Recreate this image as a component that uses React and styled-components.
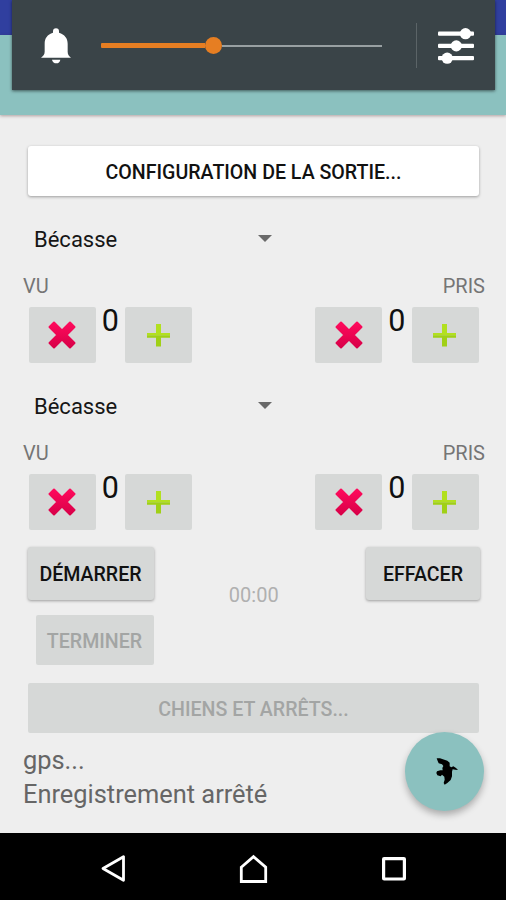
import styled, { createGlobalStyle } from "styled-components";

const GlobalStyle = createGlobalStyle`
  * {
    box-sizing: border-box;
  }
  body {
    margin: 0;
    background: #eeeeee;
    font-family: Roboto, "Noto Sans", sans-serif;
  }
`;

const Screen = styled.div`
  position: relative;
  width: 506px;
  height: 900px;
  display: flex;
  flex-direction: column;
  background: #eeeeee;
  overflow: hidden;
`;

const StatusBar = styled.div`
  height: 35px;
  background: #303f9f;
`;

const AppBar = styled.div`
  height: 80px;
  background: #8bc1bf;
  box-shadow: 0 1px 3px rgba(80, 40, 40, 0.4);
`;

// floats over the status bar and the app bar
const VolumePanel = styled.div`
  position: absolute;
  top: 0;
  left: 12px;
  width: 483px;
  height: 90px;
  padding: 1px 21px 0 29px;
  display: flex;
  align-items: center;
  background: #3a4448;
  box-shadow: 0 1px 3px rgba(0, 0, 0, 0.55);
`;

const Slider = styled.div`
  flex: 1;
  display: flex;
  align-items: center;
  margin: 0 34px 0 30px;
`;

const SliderFill = styled.div`
  width: 104px;
  height: 5px;
  border-radius: 1px 0 0 1px;
  background: #e67e22;
`;

const SliderThumb = styled.div`
  width: 17px;
  height: 17px;
  border-radius: 50%;
  background: #e67e22;
`;

const SliderTrack = styled.div`
  flex: 1;
  height: 2px;
  background: #98a0a2;
`;

const PanelDivider = styled.div`
  width: 1px;
  height: 45px;
  margin: 0 21px 0 0;
  background: #5b6467;
`;

const Content = styled.main`
  flex: 1;
  padding: 31px 21px 0 23px;
`;

const Button = styled.button`
  display: block;
  width: ${({ $width }) => $width || "auto"};
  height: ${({ $height }) => $height || "50px"};
  padding: 1px 0 0;
  border: none;
  border-radius: 3px;
  background: ${({ $white }) => ($white ? "#ffffff" : "#d6d8d7")};
  color: #111111;
  font-family: inherit;
  font-size: 19.6px;
  font-weight: 500;
  line-height: 25px;
  box-shadow: 0 1px 3px rgba(0, 0, 0, 0.35);

  &:disabled {
    padding-top: 2px;
    color: #a3a5a4;
    border-radius: 2px;
    box-shadow: none;
  }
`;

const WideButton = styled(Button)`
  width: auto;
  min-width: 451px;
  margin: 0 5px;
  padding-top: 2px;
`;

const Species = styled.section`
  padding-top: 23px;
`;

const Spinner = styled.div`
  width: 249px;
  height: 40px;
  padding-left: 11px;
  display: flex;
  align-items: center;
  justify-content: space-between;
  color: #161616;
  font-size: 22px;
`;

const Arrow = styled.span`
  border: 7px solid transparent;
  border-top-color: #696969;
  border-bottom: none;
  margin-top: -2px;
`;

const Labels = styled.div`
  display: flex;
  justify-content: space-between;
  margin-top: 15px;
  color: #757575;
  font-size: 20px;
  line-height: 24px;
`;

const Counters = styled.div`
  display: flex;
  justify-content: space-between;
  padding: 0 6.5px 0 5.5px;
  margin-top: 9px;
`;

const Counter = styled.div`
  display: flex;
  height: 56px;
`;

const CounterButton = styled.button`
  width: 67px;
  height: 56px;
  padding: 0;
  border: none;
  border-radius: 2px;
  background: #d6d8d7;
  display: flex;
  align-items: center;
  justify-content: center;
`;

const Count = styled.span`
  width: 29.5px;
  text-align: center;
  color: #101010;
  font-size: 30.5px;
  line-height: 28px;
`;

const Actions = styled.div`
  display: flex;
  justify-content: space-between;
  height: 118px;
  margin: 17px 5px 18px 4.5px;
`;

const LeftActions = styled.div`
  display: flex;
  flex-direction: column;
  align-items: flex-end;
  justify-content: space-between;
`;

const Timer = styled.span`
  margin: 36px 0 0 -12px;
  color: #b0b0b0;
  font-size: 20px;
  line-height: 24px;
`;

const Status = styled.div`
  margin-top: 10px;
  color: #666666;
  font-size: 25.4px;
  line-height: 34px;
`;

const Fab = styled.button`
  position: absolute;
  left: 405px;
  top: 732px;
  width: 79px;
  height: 79px;
  padding: 0 0 0 4px;
  border: none;
  border-radius: 50%;
  background: #8bc1bf;
  box-shadow: 0 4px 7px rgba(0, 0, 0, 0.28);
  display: flex;
  align-items: center;
  justify-content: center;
`;

const NavBar = styled.nav`
  height: 67px;
  background: #000000;
  display: flex;
  align-items: center;
  justify-content: space-between;
  padding: 4px 99px 0 99.5px;
`;

const BellIcon = () => (
  <svg width="30" height="36" viewBox="0 0 90 108" fill="#fff">
    <path d="M45 1c-6 0-9 4-9 9v4C19 19 11 31 11 47v24C11 80 6 84 0 89h90c-6-5-10-9-10-18V47C80 31 71 19 54 14v-4c0-5-3-9-9-9z" />
    <path d="M33 95h25c-1 7-6 11-12 11s-12-4-13-11z" />
  </svg>
);

const TuneIcon = () => (
  <svg width="36" height="38" viewBox="0 0 36 38" fill="#fff">
    <rect x="0" y="4.5" width="36" height="4.3" rx="1" />
    <rect x="0" y="16.7" width="36" height="4.3" rx="1" />
    <rect x="0" y="28.9" width="36" height="4.3" rx="1" />
    <circle cx="27.5" cy="6.7" r="5.6" />
    <circle cx="18.3" cy="18.9" r="5.6" />
    <circle cx="9.2" cy="31.2" r="5.6" />
  </svg>
);

const CrossIcon = () => (
  <svg width="28" height="28" viewBox="0 0 28 28">
    <defs>
      <linearGradient id="cross" x1="0" y1="0" x2="0" y2="1">
        <stop offset="0" stopColor="#ff0a5c" />
        <stop offset="1" stopColor="#d80048" />
      </linearGradient>
    </defs>
    <path
      fill="url(#cross)"
      stroke="url(#cross)"
      strokeWidth="2"
      strokeLinejoin="round"
      d="M6 1.5L14 9.5L22 1.5L26.5 6L18.5 14L26.5 22L22 26.5L14 18.5L6 26.5L1.5 22L9.5 14L1.5 6Z"
    />
  </svg>
);

const PlusIcon = () => (
  <svg width="24" height="24" viewBox="0 0 24 24">
    <path fill="#b2e01f" d="M9 1h5v9h9v2.3h-23v-2.3h9z" />
    <path fill="#a0d016" d="M0 12.3h23v2.5h-9v8.7h-5v-8.7h-9z" />
  </svg>
);

const BirdIcon = () => (
  <svg width="22" height="27" viewBox="0 0 66 81">
    <path d="M2 1L12 1L34 8L41 14L41 25L46 28L52 25L60 30L66 36L58 35L50 34L48 41L48 55L44 66L34 75L26 80L23 75L26 65L25 56L18 50L14 55L4 52L1 45L3 40L13 37L20 37L19 30L22 24L18 19L8 16L5 9Z" />
  </svg>
);

const BackIcon = () => (
  <svg width="26" height="29" viewBox="0 0 26 29" fill="none" stroke="#fff" strokeWidth="2.8">
    <path d="M23.5 2.7v23.6L3 14.5z" strokeLinejoin="round" />
  </svg>
);

const HomeIcon = () => (
  <svg width="29" height="30" viewBox="0 0 29 30" fill="none" stroke="#fff" strokeWidth="2.8">
    <path d="M2.3 13.2L14.5 2.6l12.2 10.6v14.3H2.3z" />
  </svg>
);

const RecentIcon = () => (
  <svg width="26" height="26" viewBox="0 0 26 26" fill="none" stroke="#fff" strokeWidth="3.2">
    <rect x="2.6" y="2.6" width="20.8" height="20.4" rx="0.5" />
  </svg>
);

const counters = ["VU", "PRIS"];
const species = [
  { id: 1, name: "Bécasse", VU: 0, PRIS: 0 },
  { id: 2, name: "Bécasse", VU: 0, PRIS: 0 },
];

const SpeciesCounter = ({ item }) => (
  <Species>
    <Spinner>
      {item.name}
      <Arrow />
    </Spinner>
    <Labels>
      {counters.map((label) => (
        <span key={label}>{label}</span>
      ))}
    </Labels>
    <Counters>
      {counters.map((label) => (
        <Counter key={label}>
          <CounterButton>
            <CrossIcon />
          </CounterButton>
          <Count>{item[label]}</Count>
          <CounterButton>
            <PlusIcon />
          </CounterButton>
        </Counter>
      ))}
    </Counters>
  </Species>
);

const App = () => {
  return (
    <>
      <GlobalStyle />
      <Screen>
        <StatusBar />
        <AppBar />
        <Content>
          <WideButton $white>CONFIGURATION DE LA SORTIE...</WideButton>
          {species.map((item) => (
            <SpeciesCounter key={item.id} item={item} />
          ))}
          <Actions>
            <LeftActions>
              <Button $width="126px" $height="53px">
                DÉMARRER
              </Button>
              <Button $width="118px" disabled>
                TERMINER
              </Button>
            </LeftActions>
            <Timer>00:00</Timer>
            <Button $width="114px" $height="53px">
              EFFACER
            </Button>
          </Actions>
          <WideButton disabled>CHIENS ET ARRÊTS...</WideButton>
          <Status>
            <div>gps...</div>
            <div>Enregistrement arrêté</div>
          </Status>
        </Content>
        <NavBar>
          <BackIcon />
          <HomeIcon />
          <RecentIcon />
        </NavBar>
        <VolumePanel>
          <BellIcon />
          <Slider>
            <SliderFill />
            <SliderThumb />
            <SliderTrack />
          </Slider>
          <PanelDivider />
          <TuneIcon />
        </VolumePanel>
        <Fab>
          <BirdIcon />
        </Fab>
      </Screen>
    </>
  );
};

export default App;
